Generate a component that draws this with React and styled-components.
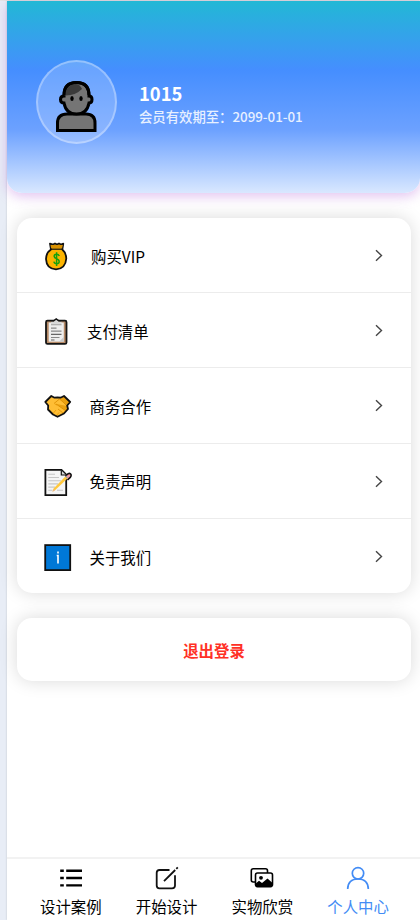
import React from 'react';
import styled, { createGlobalStyle } from 'styled-components';

const GlobalStyle = createGlobalStyle`
  * {
    box-sizing: border-box;
  }

  body {
    margin: 0;
    background-color: #e8edf6;
    font-family: 'Noto Sans CJK SC', sans-serif;
    color: #000;
    overflow: hidden;
  }
`;

const Page = styled.div`
  height: 920px;
  padding: 1px 0 0 7px;
  background: linear-gradient(#e4e4e4 1px, transparent 1px);
`;

const Phone = styled.main`
  height: 919px;
  display: flex;
  flex-direction: column;
  background-color: #fff;
  box-shadow: 0 0 2px rgba(0, 0, 0, 0.18);
`;

const Header = styled.header`
  height: 192px;
  flex: none;
  display: flex;
  align-items: center;
  padding: 10px 0 0 29px;
  border-radius: 0 0 15px 15px;
  background: linear-gradient(#22b8d5 0%, #458eff 36%, #6ca1ff 67%, #d9e8ff 100%);
  box-shadow: 0 4px 12px rgba(180, 100, 215, 0.36);
`;

const Avatar = styled.div`
  width: 81px;
  height: 84px;
  display: flex;
  justify-content: center;
  padding: 18px 2px 0 0;
  border: 2px solid rgba(255, 255, 255, 0.3);
  border-radius: 50%;
  background-color: rgba(255, 255, 255, 0.2);
`;

const Profile = styled.div`
  margin: 4px 0 0 22px;
  color: #fff;
`;

const Name = styled.div`
  font-size: 18.4px;
  line-height: 23px;
  font-weight: 700;
`;

const Expiry = styled.div`
  font-size: 13.4px;
  line-height: 22px;
  font-weight: 500;
  letter-spacing: -0.04px;
  opacity: 0.85;
`;

const Card = styled.section`
  flex: none;
  margin: 25px 9px 0 10px;
  border-radius: 15px;
  background-color: #fff;
  box-shadow: 0 0 18px rgba(0, 0, 0, 0.15);
`;

const Row = styled.div`
  height: ${props => props.$last ? '74.6px' : '75.2px'};
  display: flex;
  align-items: center;
  padding: 2px 27px 0 27px;
  border-bottom: ${props => props.$last ? '0' : '1px solid #ececec'};

  > svg:first-child {
    margin-top: 2px;
  }
`;

const RowLabel = styled.span`
  flex: 1;
  margin-left: ${props => props.$gap}px;
  font-size: 15.4px;
  line-height: 24px;
  margin-top: -1px;
`;

const Logout = styled(Card)`
  height: 63px;
  display: flex;
  align-items: center;
  justify-content: center;
  padding-top: 1px;
  color: #ff3126;
  font-size: 15.4px;
  font-weight: 700;
`;

const TabBar = styled.nav`
  height: 63px;
  flex: none;
  display: grid;
  grid-template-columns: repeat(4, 1fr);
  margin-top: auto;
  padding: 7px 14px 0 16px;
  border-top: 2px solid #f2f2f2;
`;

const Tab = styled.div`
  display: flex;
  flex-direction: column;
  align-items: center;
  color: ${props => props.$active ? '#438cf5' : '#000'};
  font-size: 15.4px;
  line-height: 24px;
  white-space: nowrap;

  svg {
    flex: none;
    margin-bottom: 4px;
  }
`;

const Person = () => (
  <svg width="42" height="54" viewBox="0 0 42 54" stroke="#000" strokeWidth="3">
    <path d="M2.5 50.5V43Q2.5 34 12 34H31Q40 34 40 43V50.5Z" fill="#757575" />
    <path d="M9 16Q9 2.5 21.5 2.5Q34 2.5 34 16Q37 16 37 19.5Q37 23 34 23Q32 34 21.5 34Q11 34 9 23Q5.5 23 5.5 19.5Q5.5 16 9 16Z" fill="#757575" />
    <path d="M9.5 15.5Q10 5 21 4Q25 4.5 27 9Q20 16 9.5 15.5Z" fill="#3b3b3b" stroke="none" />
    <path d="M9 15Q9 2.5 21.5 2.5Q34 2.5 34 15" fill="none" />
    <ellipse cx="17" cy="18.5" rx="1.7" ry="2.5" fill="#000" stroke="none" />
    <ellipse cx="26" cy="18.5" rx="1.7" ry="2.5" fill="#000" stroke="none" />
  </svg>
);

const MoneyBag = () => (
  <svg width="28" height="30" viewBox="0 0 28 30">
    <path d="M6 1.7L9 2.5L11 1.5L13 2.5L15 1.5L17 2.5L19.3 1.7L18.3 7.5Q22 10.5 22.3 16.5Q21.5 27 12 27.3Q2.5 27 2 17Q2.2 10.5 7 7.5Z" fill="#fcb400" stroke="#111" strokeWidth="1.8" strokeLinejoin="round" />
    <path d="M6.5 3H18.8L18 6.6H7.2Z" fill="#d99100" />
    <path d="M7 7.2H18" stroke="#111" strokeWidth="1.2" />
    <path d="M15.3 14Q14.5 12.2 12.3 12.3Q10.1 12.4 10.2 14.4Q10.3 16 12.5 16.6Q15.2 17.5 15.2 19.7Q15 21.7 12.8 21.8Q10.4 21.8 9.9 19.7M12.6 10.2V24" fill="none" stroke="#13a10e" strokeWidth="1.5" />
  </svg>
);

const Clipboard = () => (
  <svg width="28" height="30" viewBox="0 0 28 30">
    <rect x="2" y="3.7" width="20.5" height="23.2" rx="1.5" fill="#b68a67" stroke="#151515" strokeWidth="1.8" />
    <path d="M4.7 5.5H19.8V24.7H4.7Z" fill="#eee" />
    <path d="M15 24.7H19.8V20Z" fill="#c8c8c8" />
    <path d="M7 7.5V4.5H9.7L12.2 2L14.8 4.5H17.5V7.5Z" fill="#d9d9d9" />
    <path d="M7 3.8H9.7L12.2 2L14.8 3.8H17.5" fill="none" stroke="#151515" strokeWidth="1.5" />
    <path d="M7 7.7H17.5" stroke="#aaa" strokeWidth="1.2" />
    <path d="M7 11.2H12.5M7 14.2H17.5M7 20.5H15.5" stroke="#888" strokeWidth="1.2" />
    <path d="M7 17.3H17.5M7 23H10.5" stroke="#666" strokeWidth="1.2" />
  </svg>
);

const Handshake = () => (
  <svg width="28" height="30" viewBox="0 0 28 30">
    <path d="M1.3 10L7.3 4L10.5 5.7L13.5 5.5L16.5 5.7L20 4L26.2 10L23.2 13.5L24 17L20 21.5L13.5 24.8L9 22.5L4 17.5L4.2 13.5Z" fill="#ffbe35" />
    <path d="M20 4L26.2 10L23.2 13.5L24 17L20.5 19.5L10.5 12L16 6Z" fill="#eaa010" />
    <path d="M10 11.5L15.5 7L19 10L23 14M12 12L22 19L19 21L14 17" fill="#ffbe35" stroke="#d98b00" strokeWidth=".8" />
    <path d="M9 21.5L12 18M12.5 23.5L15 20.5" stroke="#eaa010" strokeWidth="1" />
    <path d="M1.3 10L7.3 4L10.5 5.7L13.5 5.5L16.5 5.7L20 4L26.2 10L23.2 13.5L24 17L20 21.5L13.5 24.8L9 22.5L4 17.5L4.2 13.5Z" fill="none" stroke="#111" strokeWidth="1.8" strokeLinejoin="round" />
  </svg>
);

const Memo = () => (
  <svg width="30" height="30" viewBox="0 0 30 30">
    <path d="M1.4 1.9H17.5L22.2 6.6V27.1H1.4Z" fill="#f5f5f5" stroke="#111" strokeWidth="1.8" />
    <path d="M17.3 2.5V7H22" fill="#d8d8d8" stroke="#111" strokeWidth="1.2" />
    <path d="M4.3 6.2H11M4.3 9.5H15M4.3 12.7H17M4.3 15.9H14M4.3 19.1H11M4.3 22.3H8.5M13 22.3H19" stroke="#c6c6c6" strokeWidth="1.1" />
    <path d="M22 7.5L24.2 5.7Q26 4.7 27 6.4Q27.6 8 26.3 9.4L23.5 12" fill="#ef9aa6" stroke="#111" strokeWidth="1.6" />
    <path d="M21.3 8.4L23.4 10.5L11.3 22L8.6 23.5L9.6 20.6Z" fill="#ffc83d" />
    <path d="M9.5 21L8.4 23.9L11.2 22.3Z" fill="#efb780" />
    <path d="M21.6 8.1L23.7 10.2" stroke="#aaa" strokeWidth="1.1" />
  </svg>
);

const Info = () => (
  <svg width="28" height="30" viewBox="0 0 28 30">
    <rect x="1.2" y="2.1" width="25" height="25" fill="#0078d7" stroke="#111" strokeWidth="1.8" />
    <path d="M14 8.5V10.5M12.7 12.5H14V20.5" fill="none" stroke="#fff" strokeWidth="1.6" />
  </svg>
);

const Chevron = () => (
  <svg width="10" height="14" viewBox="0 0 10 14" fill="none" stroke="#454545" strokeWidth="1.4">
    <path d="M2 1.3L7.5 6.5L2 11.7" />
  </svg>
);

const ListIcon = () => (
  <svg width="24" height="24" viewBox="0 0 24 24" stroke="#000" strokeWidth="2.4">
    <path d="M1.2 4.7H4.8M7.2 4.7H23M1.2 12H4.8M7.2 12H23M1.2 19.4H4.8M7.2 19.4H23" />
  </svg>
);

const EditIcon = () => (
  <svg width="24" height="24" viewBox="0 0 24 24" fill="none" stroke="#111" strokeWidth="1.8">
    <path d="M14.5 4H4.5Q1.7 4 1.7 6.8V19.5Q1.7 22.3 4.5 22.3H17Q20 22.3 20 19.5V9.3" />
    <path d="M9 15.2L20.2 4M21.3 2.9L22.8 1.4" />
  </svg>
);

const Gallery = () => (
  <svg width="24" height="24" viewBox="0 0 24 24" fill="none" stroke="#000" strokeWidth="1.6">
    <path d="M5 16H3.3Q1.3 16 1.3 14V4.8Q1.3 2.8 3.3 2.8H15.5Q17.5 2.8 17.5 4.8V7" />
    <rect x="5.5" y="7" width="17" height="13.6" rx="2" />
    <circle cx="11" cy="11.8" r="1.9" fill="#000" stroke="none" />
    <path d="M6 17.3L9 14.8L12 17L17.5 12.5L22 16.5V20H6Z" fill="#000" stroke="none" />
  </svg>
);

const UserIcon = () => (
  <svg width="24" height="24" viewBox="0 0 24 24" fill="none" stroke="currentColor" strokeWidth="1.7">
    <circle cx="12" cy="7.3" r="5.7" />
    <path d="M1.7 23Q2 13 12 13Q22 13 22.3 23" />
  </svg>
);

const menuItems = [
  { label: '购买VIP', icon: MoneyBag, gap: 19 },
  { label: '支付清单', icon: Clipboard, gap: 15 },
  { label: '商务合作', icon: Handshake, gap: 17.5 },
  { label: '免责声明', icon: Memo, gap: 15.5 },
  { label: '关于我们', icon: Info, gap: 17.5 },
];

const tabs = [
  { label: '设计案例', icon: ListIcon },
  { label: '开始设计', icon: EditIcon },
  { label: '实物欣赏', icon: Gallery },
  { label: '个人中心', icon: UserIcon, active: true },
];

const App = () => (
  <Page>
    <GlobalStyle />
    <Phone>
      <Header>
        <Avatar><Person /></Avatar>
        <Profile>
          <Name>1015</Name>
          <Expiry>会员有效期至：2099-01-01</Expiry>
        </Profile>
      </Header>
      <Card>
        {menuItems.map(({ label, icon: Icon, gap }, index) => (
          <Row key={label} $last={index === menuItems.length - 1}>
            <Icon />
            <RowLabel $gap={gap}>{label}</RowLabel>
            <Chevron />
          </Row>
        ))}
      </Card>
      <Logout>退出登录</Logout>
      <TabBar>
        {tabs.map(({ label, icon: Icon, active }) => (
          <Tab key={label} $active={active}>
            <Icon />
            {label}
          </Tab>
        ))}
      </TabBar>
    </Phone>
  </Page>
);

export default App;
